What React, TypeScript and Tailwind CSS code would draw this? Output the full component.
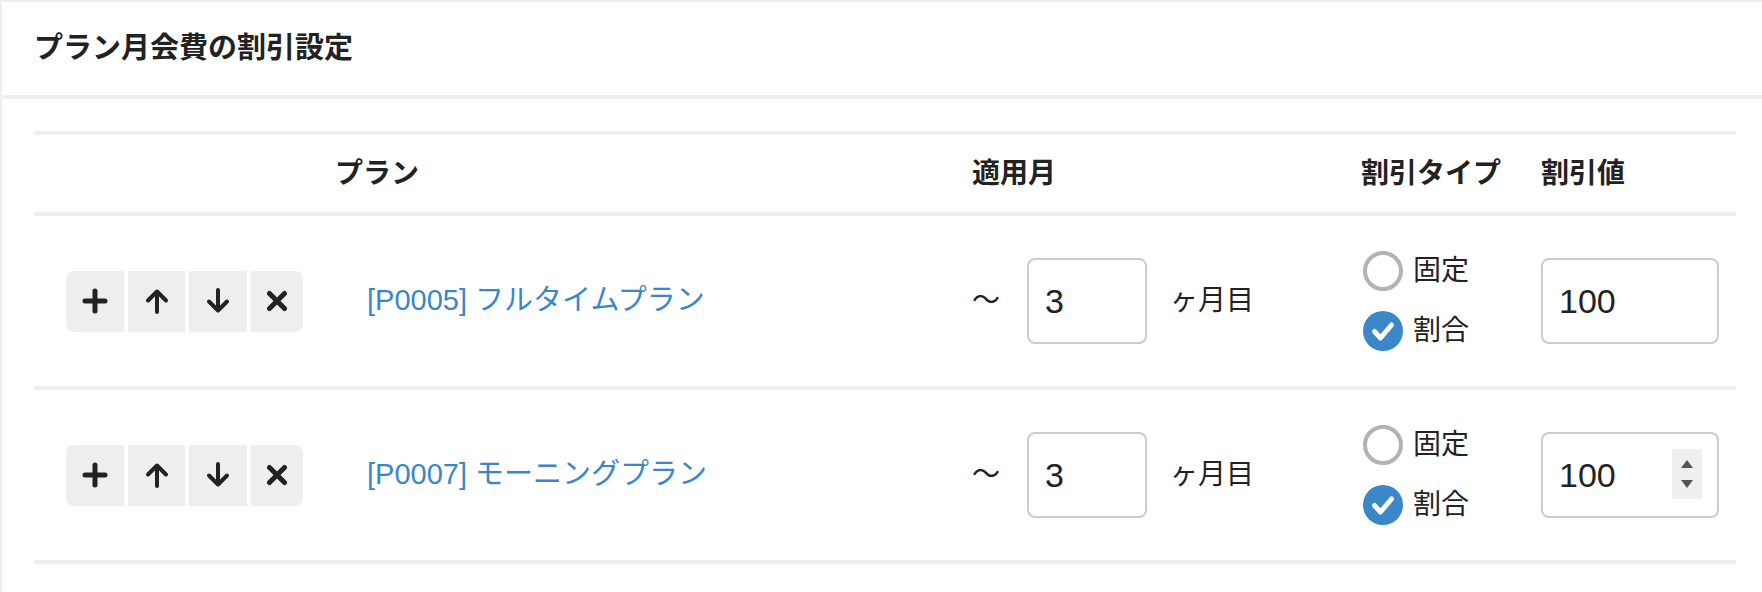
const rows = [
  { code: "[P0005] フルタイムプラン", months: "3", value: "100", spinner: false },
  { code: "[P0007] モーニングプラン", months: "3", value: "100", spinner: true },
];

function PlusIcon() {
  return (
    <svg width="26" height="26" viewBox="0 0 26 26">
      <path d="M13 3v20M3 13h20" stroke="#222" strokeWidth="5" strokeLinecap="round" />
    </svg>
  );
}

function UpIcon() {
  return (
    <svg width="26" height="26" viewBox="0 0 26 26">
      <path d="M13 24V4M4 12.5l9-9 9 9" stroke="#222" strokeWidth="4" strokeLinecap="round" strokeLinejoin="round" fill="none" />
    </svg>
  );
}

function DownIcon() {
  return (
    <svg width="26" height="26" viewBox="0 0 26 26">
      <path d="M13 2v20M4 13.5l9 9 9-9" stroke="#222" strokeWidth="4" strokeLinecap="round" strokeLinejoin="round" fill="none" />
    </svg>
  );
}

function CloseIcon() {
  return (
    <svg width="22" height="22" viewBox="0 0 22 22">
      <path d="M3.5 3.5l15 15M18.5 3.5l-15 15" stroke="#222" strokeWidth="5" strokeLinecap="round" />
    </svg>
  );
}

function Radio({ checked, label }: { checked: boolean; label: string }) {
  return (
    <label className="flex h-[60px] items-center gap-[10px]">
      {checked ? (
        <svg width="40" height="40" viewBox="0 0 40 40">
          <circle cx="20" cy="20" r="20" fill="#3b87c8" />
          <path d="M11.5 20.5l6 6.5 11-13" stroke="#fff" strokeWidth="5" strokeLinecap="round" strokeLinejoin="round" fill="none" />
        </svg>
      ) : (
        <span className="box-border block h-[40px] w-[40px] rounded-full border-[4px] border-[#b3b3b3] bg-white" />
      )}
      <span className="text-[28px] leading-[30px]">{label}</span>
    </label>
  );
}

function NumberBox({ value, width, spinner }: { value: string; width: string; spinner?: boolean }) {
  return (
    <div className={`relative flex h-[86px] items-center rounded-[8px] border-2 border-[#cccccc] bg-white pl-[16px] ${width}`}>
      <span className="text-[34px] leading-none">{value}</span>
      {spinner && (
        <div className="absolute right-[15px] top-[15px] flex h-[50px] w-[30px] flex-col items-center justify-center gap-[12px] bg-[#efefef]">
          <span className="block h-0 w-0 border-x-[6px] border-b-[8px] border-x-transparent border-b-[#555]" />
          <span className="block h-0 w-0 border-x-[6px] border-t-[8px] border-x-transparent border-t-[#555]" />
        </div>
      )}
    </div>
  );
}

export default function App() {
  return (
    <div className="min-h-[592px] bg-white font-['Liberation_Sans','Noto_Sans_CJK_JP',sans-serif] text-[#222]">
      <div className="border-b-4 border-l-2 border-t-2 border-[#eeeeee] px-[32px] py-[32px]">
        <h2 className="text-[29px] font-bold leading-[29px]">プラン月会費の割引設定</h2>
      </div>

      <div className="border-l-2 border-[#eeeeee] pb-[32px] pl-[32px] pr-[26px] pt-[32px]">
        <div className="border-t-4 border-[#eeeeee]">
          {/* header */}
          <div className="flex border-b-4 border-[#eeeeee] py-[24px] text-[28px] font-bold leading-[29px]">
            <div className="w-[301px]" />
            <div className="w-[606px]">プラン</div>
            <div className="w-[390px] pl-[31px]">適用月</div>
            <div className="w-[178px] pl-[30px]">割引タイプ</div>
            <div className="flex-1 pl-[32px]">割引値</div>
          </div>

          {rows.map((r) => (
            <div key={r.code} className="flex items-center border-b-4 border-[#eeeeee] py-[25px] text-[28px]">
              <div className="w-[301px] pl-[32px]">
                <div className="flex h-[61px] gap-[4px]">
                  <button className="flex w-[58px] items-center justify-center rounded-l-[8px] bg-[#eeeeee]">
                    <PlusIcon />
                  </button>
                  <button className="flex w-[57px] items-center justify-center bg-[#eeeeee]">
                    <UpIcon />
                  </button>
                  <button className="flex w-[58px] items-center justify-center bg-[#eeeeee]">
                    <DownIcon />
                  </button>
                  <button className="flex w-[52px] items-center justify-center rounded-r-[8px] bg-[#eeeeee]">
                    <CloseIcon />
                  </button>
                </div>
              </div>
              <div className="w-[606px] pl-[32px]">
                <a className="text-[29px] text-[#3a87c8]">{r.code}</a>
              </div>
              <div className="flex w-[390px] items-center pl-[31px]">
                <span className="w-[28px]">〜</span>
                <div className="ml-[27px]">
                  <NumberBox value={r.months} width="w-[120px]" />
                </div>
                <span className="ml-[23px]">ヶ月目</span>
              </div>
              <div className="flex w-[178px] flex-col pl-[32px]">
                <Radio checked={false} label="固定" />
                <Radio checked label="割合" />
              </div>
              <div className="flex-1 pl-[32px]">
                <NumberBox value={r.value} width="w-[178px]" spinner={r.spinner} />
              </div>
            </div>
          ))}
        </div>
      </div>
    </div>
  );
}
